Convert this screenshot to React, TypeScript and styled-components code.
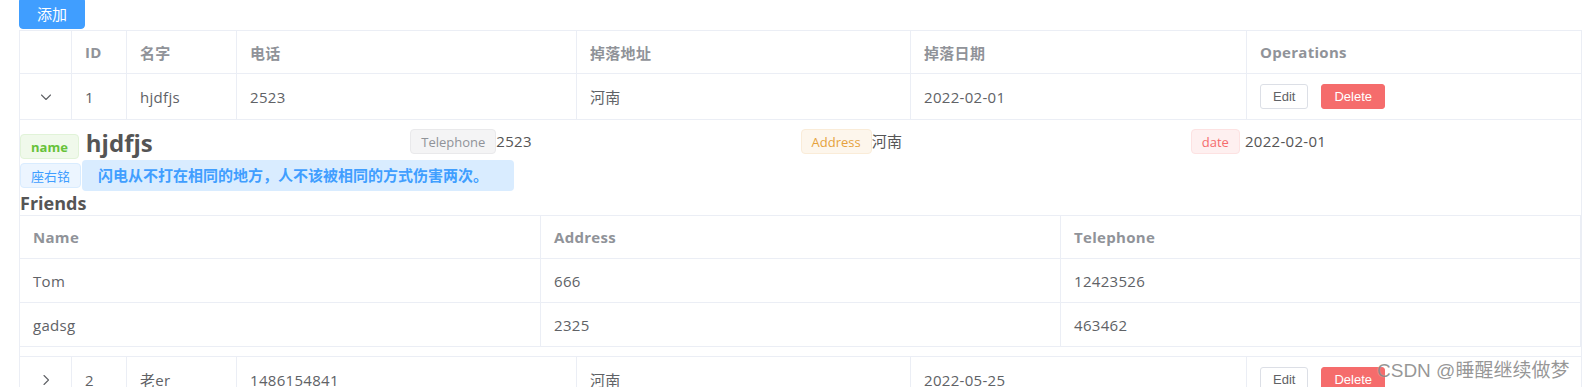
import React from 'react';
import styled, { createGlobalStyle, css } from 'styled-components';

const GlobalStyle = createGlobalStyle`
  html, body { margin: 0; padding: 0; background: #ffffff; }
  body {
    font-family: "Open Sans", "Noto Sans CJK SC", sans-serif;
    color: #606266;
    overflow: hidden;
  }
  *, *::before, *::after { box-sizing: border-box; }
`;

const BORDER = '#ebeef5';
const MAIN_COLS = '52px 55px 110px 340px 334px 336px 334px';

const Page = styled.div`
  position: relative;
  width: 1584px;
  height: 387px;
  overflow: hidden;
  padding-left: 19px;
`;

const AddButton = styled.button`
  display: block;
  margin: -3px 0 1px 0;
  height: 32px;
  padding: 0 17px;
  border: 1px solid #409eff;
  border-radius: 4px;
  background: #409eff;
  color: #ffffff;
  font-family: "Open Sans", "Noto Sans CJK SC", sans-serif;
  font-size: 15px;
`;

const Table = styled.div`
  width: 1563px;
  border: 1px solid ${BORDER};
  border-bottom: none;
`;

const Row = styled.div<{ $h: number }>`
  display: grid;
  grid-template-columns: ${MAIN_COLS};
  height: ${(p) => p.$h}px;
  border-bottom: 1px solid ${BORDER};
`;

const Cell = styled.div<{ $head?: boolean; $last?: boolean; $center?: boolean }>`
  display: flex;
  align-items: center;
  justify-content: ${(p) => (p.$center ? 'center' : 'flex-start')};
  padding-left: ${(p) => (p.$center ? '0' : '13px')};
  border-right: ${(p) => (p.$last ? 'none' : `1px solid ${BORDER}`)};
  font-size: 15px;
  letter-spacing: 0.3px;
  font-weight: ${(p) => (p.$head ? 700 : 400)};
  color: ${(p) => (p.$head ? '#909399' : '#606266')};
  white-space: nowrap;
  overflow: hidden;
`;

const Chevron = styled.svg<{ $open?: boolean }>`
  width: 12px;
  height: 12px;
  transform: rotate(${(p) => (p.$open ? '90deg' : '0deg')});
`;

const Btn = styled.button<{ $danger?: boolean }>`
  height: 25px;
  padding: 0 12px;
  border-radius: 3px;
  font-family: "Liberation Sans", Arial, sans-serif;
  font-size: 13px;
  line-height: 23px;
  letter-spacing: 0;
  ${(p) =>
    p.$danger
      ? css`
          background: #f56c6c;
          border: 1px solid #f56c6c;
          color: #ffffff;
        `
      : css`
          background: #ffffff;
          border: 1px solid #dcdfe6;
          color: #606266;
        `}
  & + & {
    margin-left: 13px;
  }
`;

const ExpandPanel = styled.div`
  height: 237px;
  border-bottom: 1px solid ${BORDER};
  padding-top: 9px;
`;

const InfoGrid = styled.div`
  display: grid;
  grid-template-columns: repeat(4, 1fr);
  align-items: start;
  height: 31px;
`;

const InfoCol = styled.div`
  display: flex;
  align-items: baseline;
`;

type Variant = 'success' | 'info' | 'warning' | 'danger' | 'primary';
const tagColors: Record<Variant, { bg: string; bd: string; fg: string }> = {
  success: { bg: '#f0f9eb', bd: '#e1f3d8', fg: '#67c23a' },
  info: { bg: '#f4f4f5', bd: '#e9e9eb', fg: '#909399' },
  warning: { bg: '#fdf6ec', bd: '#faecd8', fg: '#e6a23c' },
  danger: { bg: '#fef0f0', bd: '#fde2e2', fg: '#f56c6c' },
  primary: { bg: '#ecf5ff', bd: '#d9ecff', fg: '#409eff' },
};

const Tag = styled.span<{ $v: Variant; $bold?: boolean }>`
  display: inline-block;
  height: 25px;
  line-height: 25px;
  padding: 0 10px;
  border: 1px solid ${(p) => tagColors[p.$v].bd};
  border-radius: 4px;
  background: ${(p) => tagColors[p.$v].bg};
  color: ${(p) => tagColors[p.$v].fg};
  font-size: 13px;
  font-weight: ${(p) => (p.$bold ? 700 : 400)};
  white-space: nowrap;
  flex: none;
`;

const BigName = styled.span`
  margin-left: 7px;
  font-size: 24px;
  line-height: 28.8px;
  font-weight: 700;
  color: #555555;
`;

const Value = styled.span<{ $gap?: number }>`
  margin-left: ${(p) => p.$gap ?? 0}px;
  font-size: 15px;
  letter-spacing: 0.3px;
  color: #555555;
  white-space: nowrap;
`;

const MottoRow = styled.div`
  display: flex;
  align-items: center;
  height: 31px;
`;

const MottoBox = styled.div`
  margin-left: 1px;
  height: 31px;
  line-height: 31px;
  padding: 0 26px 0 16px;
  border-radius: 4px;
  background: #d9ecff;
  color: #409eff;
  font-size: 15px;
  font-weight: 700;
  white-space: nowrap;
`;

const SectionTitle = styled.div`
  font-size: 18px;
  line-height: 24px;
  font-weight: 700;
  color: #555555;
`;

const SubTable = styled.div`
  width: 1561px;
  border-top: 1px solid ${BORDER};
`;

const SubRow = styled.div<{ $h: number }>`
  display: grid;
  grid-template-columns: 521px 520px 520px;
  height: ${(p) => p.$h}px;
  border-bottom: 1px solid ${BORDER};
`;

const SubCell = styled.div<{ $head?: boolean }>`
  display: flex;
  align-items: center;
  padding-left: 13px;
  border-right: 1px solid ${BORDER};
  font-size: 15px;
  letter-spacing: 0.3px;
  font-weight: ${(p) => (p.$head ? 700 : 400)};
  color: ${(p) => (p.$head ? '#909399' : '#606266')};
  white-space: nowrap;
`;

const Watermark = styled.span`
  position: absolute;
  left: 1377px;
  top: 361px;
  font-family: "Liberation Sans", "Noto Sans CJK SC", sans-serif;
  font-size: 19px;
  line-height: 19px;
  color: rgba(110, 110, 110, 0.72);
  text-shadow: 0 0 1px rgba(255, 255, 255, 0.6);
  white-space: nowrap;
  pointer-events: none;
`;

const ArrowIcon: React.FC<{ open?: boolean }> = ({ open }) => (
  <Chevron $open={open} viewBox="0 0 12 12" fill="none">
    <path d="M4 1.5 L8.5 6 L4 10.5" stroke="#606266" strokeWidth="1.1" strokeLinecap="round" strokeLinejoin="round" />
  </Chevron>
);

interface Rec {
  id: number;
  name: string;
  tel: string;
  addr: string;
  date: string;
  open?: boolean;
}

const records: Rec[] = [
  { id: 1, name: 'hjdfjs', tel: '2523', addr: '河南', date: '2022-02-01', open: true },
  { id: 2, name: '老er', tel: '1486154841', addr: '河南', date: '2022-05-25' },
];

const friends = [
  { name: 'Tom', address: '666', tel: '12423526' },
  { name: 'gadsg', address: '2325', tel: '463462' },
];

const DataRow: React.FC<{ r: Rec }> = ({ r }) => (
  <Row $h={46}>
    <Cell $center>
      <ArrowIcon open={r.open} />
    </Cell>
    <Cell>{r.id}</Cell>
    <Cell>{r.name}</Cell>
    <Cell>{r.tel}</Cell>
    <Cell>{r.addr}</Cell>
    <Cell>{r.date}</Cell>
    <Cell $last>
      <Btn>Edit</Btn>
      <Btn $danger>Delete</Btn>
    </Cell>
  </Row>
);

export default function App() {
  const r = records[0];
  return (
    <>
      <GlobalStyle />
      <Page>
        <AddButton>添加</AddButton>
        <Table>
          <Row $h={43}>
            <Cell $head />
            <Cell $head>ID</Cell>
            <Cell $head>名字</Cell>
            <Cell $head>电话</Cell>
            <Cell $head>掉落地址</Cell>
            <Cell $head>掉落日期</Cell>
            <Cell $head $last>Operations</Cell>
          </Row>
          <DataRow r={records[0]} />
          <ExpandPanel>
            <InfoGrid>
              <InfoCol>
                <Tag $v="success" $bold>name</Tag>
                <BigName>{r.name}</BigName>
              </InfoCol>
              <InfoCol>
                <Tag $v="info">Telephone</Tag>
                <Value>{r.tel}</Value>
              </InfoCol>
              <InfoCol>
                <Tag $v="warning">Address</Tag>
                <Value>{r.addr}</Value>
              </InfoCol>
              <InfoCol>
                <Tag $v="danger">date</Tag>
                <Value $gap={5}>{r.date}</Value>
              </InfoCol>
            </InfoGrid>
            <MottoRow>
              <Tag $v="primary">座右铭</Tag>
              <MottoBox>闪电从不打在相同的地方，人不该被相同的方式伤害两次。</MottoBox>
            </MottoRow>
            <SectionTitle>Friends</SectionTitle>
            <SubTable>
              <SubRow $h={43}>
                <SubCell $head>Name</SubCell>
                <SubCell $head>Address</SubCell>
                <SubCell $head>Telephone</SubCell>
              </SubRow>
              {friends.map((f) => (
                <SubRow $h={44} key={f.name}>
                  <SubCell>{f.name}</SubCell>
                  <SubCell>{f.address}</SubCell>
                  <SubCell>{f.tel}</SubCell>
                </SubRow>
              ))}
            </SubTable>
          </ExpandPanel>
          <DataRow r={records[1]} />
        </Table>
        <Watermark>CSDN @睡醒继续做梦</Watermark>
      </Page>
    </>
  );
}
